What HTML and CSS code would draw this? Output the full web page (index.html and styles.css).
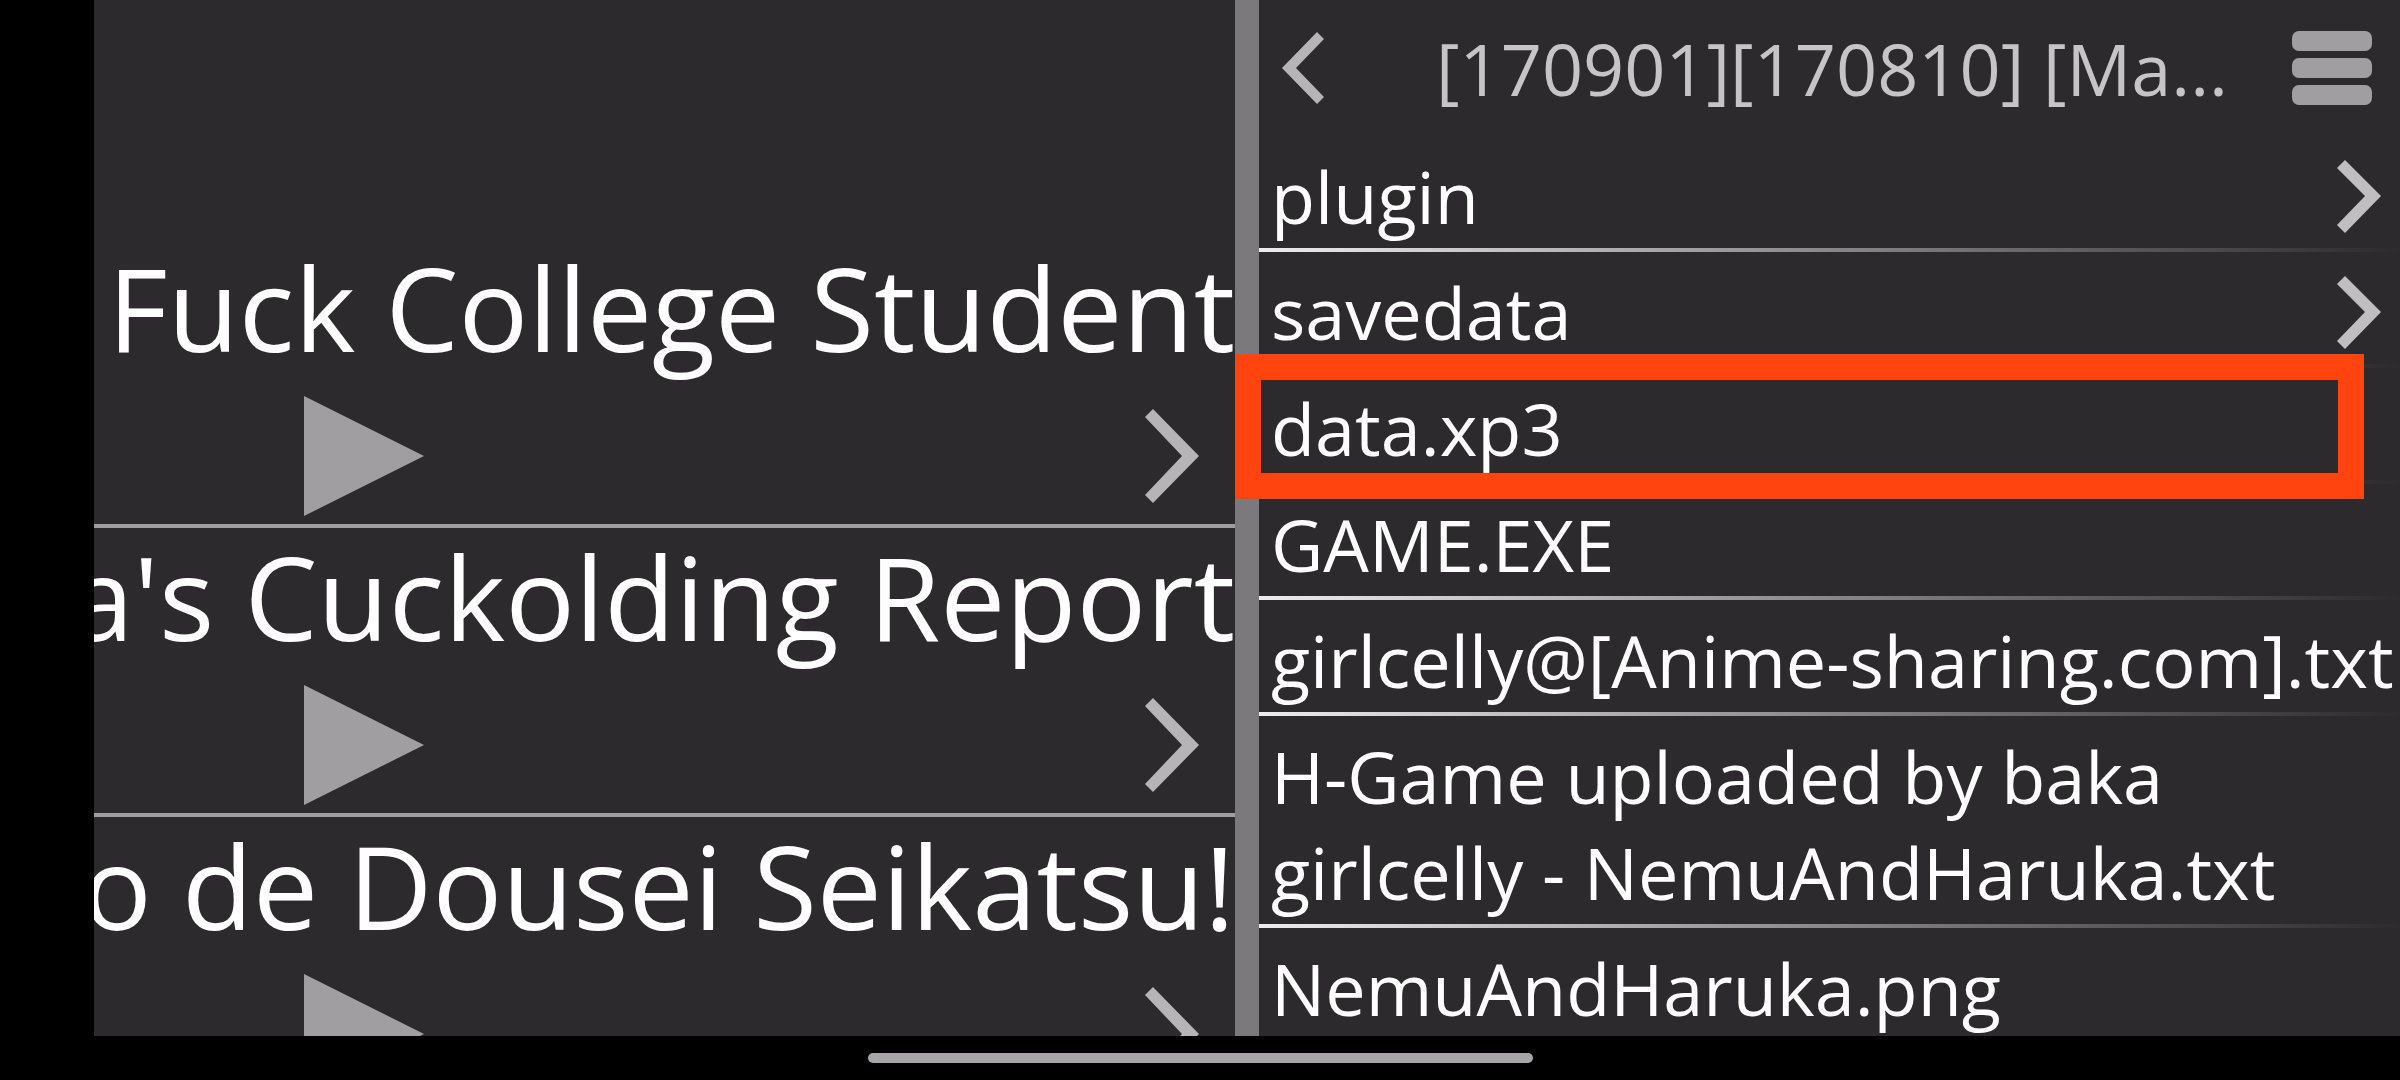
FILE: index.html
```html
<!DOCTYPE html>
<html lang="en">
<head>
  <meta charset="UTF-8">
  <title>File Browser</title>
  <link rel="stylesheet" href="styles.css">
</head>
<body>

  <main class="panes">
    <section class="games">
      <article class="game">
        <h2>Fuck College Student</h2>
        <div class="actions">
          <button class="play" aria-label="Play">
            <svg width="120" height="120" viewBox="0 0 120 120"><path d="M0 0 120 60 0 120Z" /></svg>
          </button>
          <button class="open" aria-label="Open">
            <svg width="54" height="94" viewBox="0 0 54 94"><path d="M0 8 8 0 54 47 8 94 0 86 37 47Z" /></svg>
          </button>
        </div>
      </article>
      <article class="game">
        <h2>a's Cuckolding Report</h2>
        <div class="actions">
          <button class="play" aria-label="Play">
            <svg width="120" height="120" viewBox="0 0 120 120"><path d="M0 0 120 60 0 120Z" /></svg>
          </button>
          <button class="open" aria-label="Open">
            <svg width="54" height="94" viewBox="0 0 54 94"><path d="M0 8 8 0 54 47 8 94 0 86 37 47Z" /></svg>
          </button>
        </div>
      </article>
      <article class="game">
        <h2>o de Dousei Seikatsu!</h2>
        <div class="actions">
          <button class="play" aria-label="Play">
            <svg width="120" height="120" viewBox="0 0 120 120"><path d="M0 0 120 60 0 120Z" /></svg>
          </button>
          <button class="open" aria-label="Open">
            <svg width="54" height="94" viewBox="0 0 54 94"><path d="M0 8 8 0 54 47 8 94 0 86 37 47Z" /></svg>
          </button>
        </div>
      </article>
    </section>

    <div class="divider"></div>

    <section class="files">
      <header class="bar">
        <button class="back" aria-label="Back">
          <svg width="42" height="72" viewBox="0 0 42 72"><path d="M42 7 35 0 0 36 35 72 42 65 14 36Z" /></svg>
        </button>
        <h1>[170901][170810] [Ma...</h1>
        <button class="menu" aria-label="Menu">
          <svg width="80" height="74" viewBox="0 0 80 74">
            <rect width="80" height="20" rx="7" />
            <rect y="27" width="80" height="20" rx="7" />
            <rect y="54" width="80" height="20" rx="7" />
          </svg>
        </button>
      </header>
      <ul>
        <li>
          <a href="#plugin">plugin
            <svg width="44" height="73" viewBox="0 0 44 73"><path d="M0 8 8 0 44 36 8 73 0 65 28 36Z" /></svg>
          </a>
        </li>
        <li>
          <a href="#savedata">savedata
            <svg width="44" height="73" viewBox="0 0 44 73"><path d="M0 8 8 0 44 36 8 73 0 65 28 36Z" /></svg>
          </a>
        </li>
        <li class="marked"><a href="#data">data.xp3</a></li>
        <li><a href="#game">GAME.EXE</a></li>
        <li><a href="#anime">girlcelly@[Anime-sharing.com].txt</a></li>
        <li><a href="#readme">H-Game uploaded by baka<br>girlcelly - NemuAndHaruka.txt</a></li>
        <li><a href="#image">NemuAndHaruka.png</a></li>
      </ul>
    </section>
  </main>

  <footer class="nav">
    <div class="handle"></div>
  </footer>

</body>
</html>
```

FILE: styles.css
```css
* {
  margin: 0;
  padding: 0;
  box-sizing: border-box;
  font-family: 'Open Sans', 'Noto Sans', sans-serif;
}

body {
  background: #000;
  color: white;
  display: flex;
  flex-direction: column;
  height: 100vh;
  overflow: hidden;
}

h1, h2 {
  font-weight: normal;
  white-space: nowrap;
}

button {
  background: none;
  border: none;
  cursor: pointer;
}

svg {
  display: block;
  flex-shrink: 0;
}

.panes {
  flex: 1;
  min-height: 0;
  margin-left: 94px;
  background: #2d2a2d;
  display: grid;
  grid-template-columns: minmax(0, 1fr) 24px minmax(0, 1fr);
  overflow: hidden;
}

.divider {
  background: #7c797c;
}

/* left pane */
.games {
  padding-top: 239px;
  min-height: 0;
  overflow: hidden;
}

.game {
  padding-bottom: 8px;
  border-bottom: 4px solid #a19ea1;
}

.game h2 {
  display: flex;
  justify-content: flex-end;
  font-size: 116px;
  line-height: 137px;
}

.actions {
  display: flex;
  justify-content: space-between;
  align-items: center;
  margin-top: 20px;
  padding: 0 36px 0 210px;
}

.play {
  fill: #a19ea1;
}

.open {
  fill: #b6b4b7;
}

/* right pane */
.files {
  min-height: 0;
}

.bar {
  display: flex;
  justify-content: space-between;
  align-items: center;
  height: 136px;
  padding: 0 28px 0 23px;
}

.bar h1 {
  flex: 1;
  padding-left: 48px;
  color: #c6c4c7;
  font-size: 72px;
  text-align: center;
}

.back {
  fill: #b6b4b7;
}

.menu {
  fill: #a19ea1;
}

.files ul {
  list-style: none;
}

.files li {
  position: relative;
  border-bottom: 4px solid;
  border-image: linear-gradient(to right, #efecef, #8a878a 50%, #2d2a2d) 1;
}

.files a {
  display: flex;
  justify-content: space-between;
  align-items: center;
  padding: 12px 19px 4px 12px;
  color: white;
  font-size: 72px;
  line-height: 96px;
  text-decoration: none;
  white-space: nowrap;
}

.files a svg {
  fill: #c0bec1;
}

.marked::after {
  content: "";
  position: absolute;
  top: -14px;
  right: 36px;
  bottom: -19px;
  left: -24px;
  border: 26px solid #ff440f;
  pointer-events: none;
}

/* gesture bar */
.nav {
  display: flex;
  justify-content: center;
  align-items: center;
  height: 44px;
}

.handle {
  width: 665px;
  height: 10px;
  border-radius: 5px;
  background: #a8a5a8;
}
```
